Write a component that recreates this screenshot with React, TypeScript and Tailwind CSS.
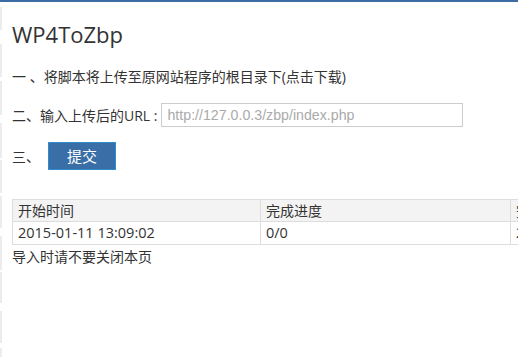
const STRIPS = [
  [7, 23],
  [44, 33],
  [81, 34],
  [123, 35],
  [160, 33],
  [196, 32],
  [236, 34],
  [272, 31],
  [311, 32],
  [348, 9],
];

const FONT = "font-['Segoe_UI','Open_Sans','Noto_Sans_CJK_SC',sans-serif]";

export default function App() {
  return (
    <div className={`relative h-[357px] w-[518px] overflow-hidden bg-white text-[#333] ${FONT}`}>
      <div className="h-[2px] bg-[#3b6ca3]" />

      {/* left gray strips from the outer frame */}
      <div className="absolute left-0 top-0 h-full w-[2px]">
        {STRIPS.map(([top, h]) => (
          <div
            key={top}
            className="absolute left-0 w-[2px] bg-[#ececec]"
            style={{ top, height: h }}
          />
        ))}
      </div>

      <div className="pl-3">
        <h1 className="mt-[17px] text-[22px] leading-[30px] font-normal">WP4ToZbp</h1>

        <p className="mt-[18px] text-[14px] leading-[20px]">一 、将脚本将上传至原网站程序的根目录下(点击下载)</p>

        <div className="mt-[16px] flex items-center text-[14px]">
          <span>二、输入上传后的URL :</span>
          <input
            className="ml-[4px] h-[24px] w-[302px] border border-[#ccc] px-[5px] font-['Liberation_Sans',sans-serif] text-[14.2px] outline-none placeholder:text-[#aaa]"
            placeholder="http://127.0.0.3/zbp/index.php"
          />
        </div>

        <div className="mt-[15px] flex items-center text-[14px]">
          <span>三、</span>
          <button className="ml-[8px] h-[28px] w-[68px] border border-[#2d8ccc] bg-[#3a6ea6] text-[15px] text-white">
            提交
          </button>
        </div>

        <table className="mt-[29px] w-[760px] border-collapse text-[14px]">
          <thead>
            <tr className="bg-[#f3f3f3]">
              <th className="h-[22px] w-[248px] border border-[#ddd] px-[5px] py-0 text-left font-normal">开始时间</th>
              <th className="h-[22px] w-[250px] border border-[#ddd] px-[5px] py-0 text-left font-normal">完成进度</th>
              <th className="h-[22px] border border-[#ddd] px-[5px] py-0 text-left font-normal">完成时间</th>
            </tr>
          </thead>
          <tbody className="text-[14.5px]">
            <tr>
              <td className="h-[23px] border border-[#ddd] px-[5px] py-0">2015-01-11 13:09:02</td>
              <td className="h-[23px] border border-[#ddd] px-[5px] py-0">0/0</td>
              <td className="h-[23px] border border-[#ddd] px-[5px] py-0">2015-01-11 13:09:02</td>
            </tr>
          </tbody>
        </table>

        <p className="mt-[2px] text-[14px] leading-[20px]">导入时请不要关闭本页</p>
      </div>
    </div>
  );
}
